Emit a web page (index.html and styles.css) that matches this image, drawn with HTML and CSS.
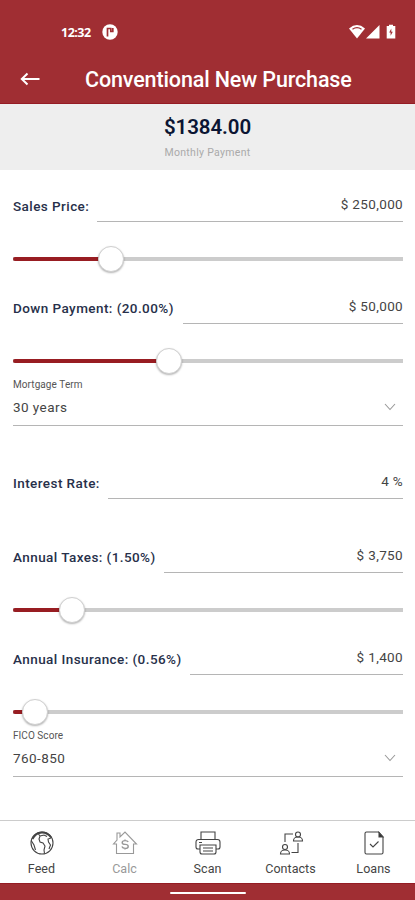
FILE: index.html
```html
<!DOCTYPE html>
<html lang="en">
<head>
<meta charset="utf-8">
<meta name="viewport" content="width=device-width, initial-scale=1">
<title>Conventional New Purchase</title>
<link rel="stylesheet" href="styles.css">
</head>
<body>
<div class="app">
  <header class="header">
    <div class="status">
      <span class="clock">12:32</span>
      <svg class="badge" width="16" height="16" viewBox="0 0 16 16"><circle cx="8" cy="8" r="7.7" fill="#fff"/><path d="M5.500 12.500V4.500H9.500M8.800 4v3.500h2V4" fill="none" stroke="#a02e33" stroke-width="1.7"/></svg>
      <svg class="signals" width="50" height="16" viewBox="0 0 50 16"><path d="M0 4.500Q8-2.300 16 4.500L8 14.500Z" fill="#fff"/><path d="M3.500 5.200Q8 2 12.500 5.200" fill="none" stroke="#a02e33" stroke-width="1.2"/><path d="M30.500 1v13.500H17Z" fill="#fff"/><path d="M40 2V.7h4V2h2.300v12.500h-8.600V2Z" fill="#fff"/><path d="m42.300 4.500-2.100 4h1.400v3.200l2.200-4h-1.500Z" fill="#a02e33"/></svg>
    </div>
    <div class="titlebar">
      <svg class="back" width="22" height="16" viewBox="0 0 22 16"><path d="M20.500 8H3M8.500 2.500 2.800 8l5.700 5.500" fill="none" stroke="#fff" stroke-width="2"/></svg>
      <h1>Conventional New Purchase</h1>
    </div>
  </header>
  <section class="summary">
    <strong>$1384.00</strong>
    <span>Monthly Payment</span>
  </section>
  <main class="form">
    <div class="field"><label class="l-price">Sales Price:</label><div class="value">$ 250,000</div></div>
    <div class="slider"><div class="fill" style="width:97.5px"></div><div class="thumb"></div></div>
    <div class="field"><label class="l-down">Down Payment: (20.00%)</label><div class="value">$ 50,000</div></div>
    <div class="slider"><div class="fill" style="width:156px"></div><div class="thumb"></div></div>
    <div class="select"><small>Mortgage Term</small><div class="choice"><span>30 years</span><svg width="12" height="8" viewBox="0 0 12 8"><path d="m1 1 5 5.500L11 1"/></svg></div></div>
    <div class="field rate"><label class="l-rate">Interest Rate:</label><div class="value">4 %</div></div>
    <div class="field taxes"><label class="l-tax">Annual Taxes: (1.50%)</label><div class="value">$ 3,750</div></div>
    <div class="slider"><div class="fill" style="width:58.5px"></div><div class="thumb"></div></div>
    <div class="field"><label class="l-ins">Annual Insurance: (0.56%)</label><div class="value">$ 1,400</div></div>
    <div class="slider"><div class="fill" style="width:22px"></div><div class="thumb"></div></div>
    <div class="select"><small class="fico">FICO Score</small><div class="choice"><span>760-850</span><svg width="12" height="8" viewBox="0 0 12 8"><path d="m1 1 5 5.500L11 1"/></svg></div></div>
  </main>
  <nav class="tabs">
    <a><svg width="26" height="26" viewBox="0 0 26 26"><circle cx="13" cy="13" r="11"/><path d="M2.500 11l2.500 4 1.500 5M9.500 4l1.500 2-1 3 1 3 3 1 2 3-1 4 .5 3.500M11 6l4-1 3 1.500M22 8l-3 1 .5 3 2 3-1.500 4"/><path d="M3.500 9c2-4 5-6.500 9.500-6.500 4 0 7 2 9 5" stroke-width="1.8"/></svg><span>Feed</span></a>
    <a class="active"><svg width="26" height="26" viewBox="0 0 26 26"><path d="M4.500 23.500V14H1.500L5 10V3h3v4l5-5 11.500 12h-3v9.500Z"/><path d="M16.200 12c-.5-1-1.400-1.400-3-1.400-4 0-4 3.800 0 3.800s4 4 0 4c-1.700 0-2.800-.6-3.300-1.800M13 9.500v1M13 18.500v1" stroke-width="1.4"/></svg><span>Calc</span></a>
    <a><svg width="26" height="26" viewBox="0 0 26 26"><path d="M6 9V2h14v7M5 19H3a2 2 0 0 1-2-2v-5a2.500 2.500 0 0 1 2.500-2.500h19A2.500 2.500 0 0 1 25 12v5a2 2 0 0 1-2 2h-2M4 12.500h3M5 15h16v7a2 2 0 0 1-2 2H7a2 2 0 0 1-2-2ZM8 18h10M8 21h10"/></svg><span>Scan</span></a>
    <a><svg width="26" height="26" viewBox="0 0 26 26"><circle cx="20" cy="4.500" r="2.500"/><path d="M15.500 11c.1-3 1-4 4.500-4s4.400 1 4.500 4Z"/><circle cx="7" cy="17" r="2.500"/><path d="M2.500 24c.1-3 1-4 4.500-4s4.400 1 4.500 4ZM7 12V4h8M13.500 22.500H20V13"/></svg><span>Contacts</span></a>
    <a><svg width="26" height="26" viewBox="0 0 26 26"><path d="M5.500 2h12L22 7v15.500a1.500 1.500 0 0 1-1.500 1.500H5.500A1.500 1.500 0 0 1 4 22.500v-19A1.500 1.500 0 0 1 5.500 2ZM9 14l3 3 5.500-5.500"/><path d="M18 2.500V7h4Z" fill="#333"/></svg><span>Loans</span></a>
  </nav>
  <footer class="homebar"><i></i></footer>
</div>
</body>
</html>
```
FILE: styles.css
```css
* { box-sizing: border-box; }
body { margin: 0; background: #fff; font-family: Roboto, "Liberation Sans", sans-serif; color: #444; }
.app { width: 415px; height: 900px; display: flex; flex-direction: column; overflow: hidden; }
.header { height: 103.5px; background: #a02e33; color: #fff; border-bottom: 1px solid #951c24; flex: none; }
.status { height: 55px; padding: 24px 16px 0 61px; display: flex; align-items: flex-start; }
.clock { font: 700 12.5px/18px "Open Sans", sans-serif; width: 41px; letter-spacing: -.5px; }
.signals { margin-left: auto; }
.titlebar { display: flex; align-items: center; height: 49px; padding-left: 19px; }
.back { margin-top: -2px; }
h1 { margin: 0 0 0 44px; font-size: 21.5px; line-height: 28px; font-weight: 500; white-space: nowrap; letter-spacing: -.13px; }
.summary { height: 66.5px; flex: none; background: #eee; display: flex; flex-direction: column; align-items: center; }
.summary strong { font: 600 20.5px/28px Roboto, sans-serif; color: #0b1533; margin-top: 9.5px; letter-spacing: -.1px; }
.summary span { font-size: 10.5px; line-height: 16px; margin-top: 4px; color: #aaa; letter-spacing: .3px; }
.form { padding: 0 12px 0 13px; flex: 1; }
.field { height: 52px; display: flex; align-items: flex-end; gap: 8px; }
.field label { font-size: 13.5px; line-height: 18px; font-weight: 500; color: #27304a; margin-bottom: 7px; white-space: nowrap; letter-spacing: .43px; flex: none; }
.field .l-price { width: 76px; }
.l-down { width: 162px; }
.field .l-rate { width: 87px; }
.l-tax { width: 143px; }
.l-ins { width: 169px; }
.value { flex: 1; height: 31px; border-bottom: 1px solid #b5b5b5; text-align: right; font-size: 13.5px; line-height: 27px; color: #444; letter-spacing: .35px; }
.rate { height: 73px; }
.taxes { height: 74px; }
.slider { height: 27px; margin-top: 23px; display: flex; align-items: center; background: linear-gradient(#ccc, #ccc) center / 100% 4px no-repeat; }
.fill { height: 4px; background: #981d22; border-radius: 2px 0 0 2px; }
.thumb { width: 26px; height: 26px; margin-left: -13px; border: 1px solid #d0d0d0; border-radius: 50%; background: #fff; box-shadow: 0 1px 2px rgba(0, 0, 0, .3); }
.select { height: 52px; padding-top: 4px; border-bottom: 1px solid #b5b5b5; }
.select small { display: block; font-size: 10px; line-height: 14px; color: #555; letter-spacing: .08px; }
.select .fico { letter-spacing: .05px; }
.choice { display: flex; justify-content: space-between; align-items: center; padding-right: 7px; font-size: 13.5px; line-height: 20px; margin-top: 5px; letter-spacing: .45px; }
.choice svg { fill: none; stroke: #999; stroke-width: 1.1; }
.tabs { height: 63px; flex: none; border-top: 1.5px solid #ccc; display: grid; grid-template-columns: repeat(5, 1fr); }
.tabs a { display: flex; flex-direction: column; align-items: center; padding-top: 9px; font-size: 12.5px; line-height: 18px; color: #444; letter-spacing: .05px; }
.tabs svg { fill: none; stroke: #444; stroke-width: 1.1; }
.tabs span { margin-top: 4px; }
.tabs .active { color: #999; }
.tabs .active svg { stroke: #999; }
.homebar { height: 17px; flex: none; background: #a02e33; display: flex; justify-content: center; align-items: center; padding-top: 2px; border-top: 1px solid #951c24; }
.homebar i { width: 76px; height: 2.5px; background: #fff; border-radius: 2px; }
```
